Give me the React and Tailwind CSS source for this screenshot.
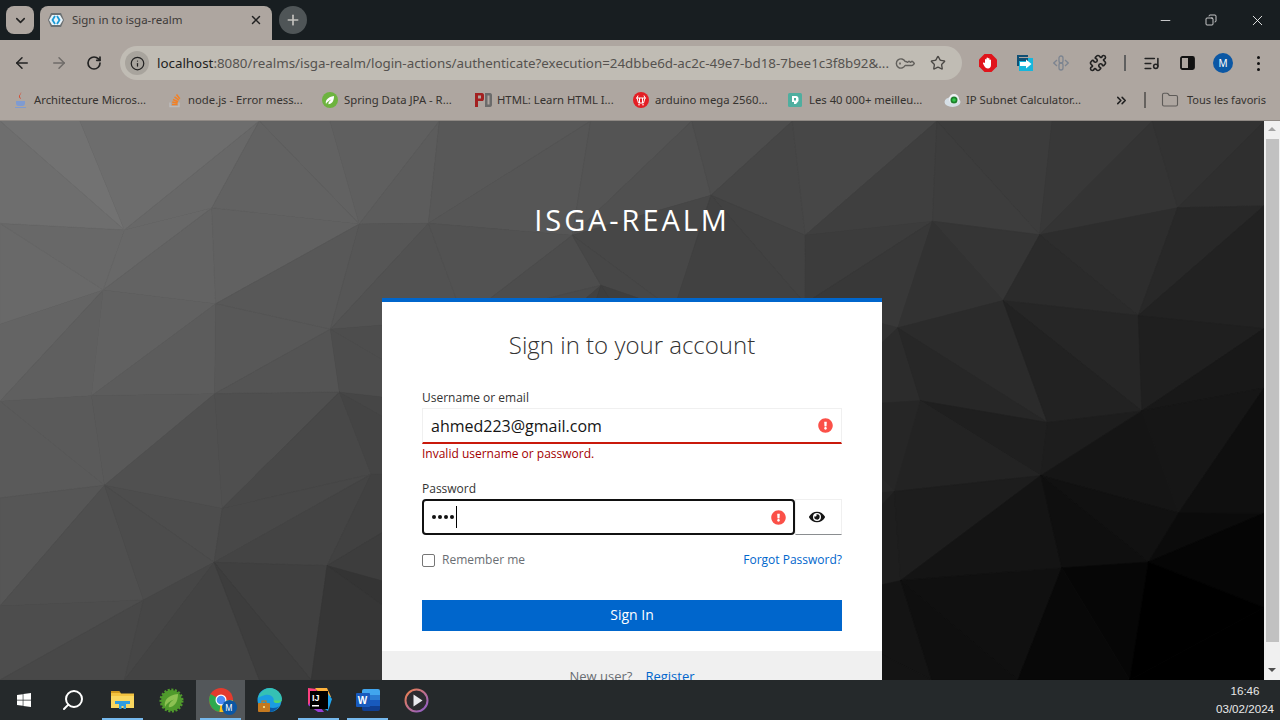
import {
  ArrowLeft,
  ArrowRight,
  ChevronDown,
  ChevronsRight,
  Copy,
  Folder,
  Info,
  KeyRound,
  ListMusic,
  Minus,
  Plus,
  Puzzle,
  RotateCw,
  Search,
  Star,
  X,
} from "lucide-react";
import { FaExclamationCircle, FaEye, FaWindows } from "react-icons/fa";

// low-poly backdrop, seeded so every render gives the same mesh
function buildMesh() {
  let seed = 7;
  const rnd = () => {
    seed = (seed * 16807) % 2147483647;
    return seed / 2147483647;
  };
  const cols = 11;
  const rows = 6;
  const w = 1264;
  const h = 559;
  const pts = [];
  for (let r = 0; r <= rows; r++) {
    const row = [];
    for (let c = 0; c <= cols; c++) {
      const jx = c === 0 || c === cols ? 0 : (rnd() - 0.5) * 70;
      const jy = r === 0 || r === rows ? 0 : (rnd() - 0.5) * 50;
      row.push([(c * w) / cols + jx, (r * h) / rows + jy]);
    }
    pts.push(row);
  }
  const shade = (a, b, c) => {
    const x = (a[0] + b[0] + c[0]) / 3;
    const y = (a[1] + b[1] + c[1]) / 3;
    const top = 120 - 0.055 * x;
    const bottom = 78 - 0.068 * x;
    const v = top + ((bottom - top) * y) / 530 + (rnd() - 0.5) * 4;
    const g = Math.max(0, Math.round(v));
    return `rgb(${g},${g},${g})`;
  };
  const tris = [];
  for (let r = 0; r < rows; r++) {
    for (let c = 0; c < cols; c++) {
      const p = pts[r][c];
      const q = pts[r][c + 1];
      const s = pts[r + 1][c];
      const t = pts[r + 1][c + 1];
      const pair = rnd() > 0.5 ? [[p, q, s], [q, t, s]] : [[p, q, t], [p, t, s]];
      pair.forEach((tri) => tris.push({ d: tri.map((n) => n.join(",")).join(" "), fill: shade(...tri) }));
    }
  }
  return tris;
}

const MESH = buildMesh();

const BOOKMARKS = [
  { label: "Architecture Micros...", icon: <JavaIcon />, box: "w-[154px]", slot: "w-[20px]" },
  { label: "node.js - Error mess...", icon: <StackIcon />, box: "w-[154px]", slot: "w-[20px]" },
  { label: "Spring Data JPA - R...", icon: <SpringIcon />, box: "w-[153px]", slot: "w-[22px]" },
  { label: "HTML: Learn HTML I...", icon: <PdIcon />, box: "w-[158px]", slot: "w-[22px]" },
  { label: "arduino mega 2560...", icon: <CartIcon />, box: "w-[155px]", slot: "w-[22px]" },
  { label: "Les 40 000+ meilleu...", icon: <DocIcon />, box: "w-[156px]", slot: "w-[21px]" },
  { label: "IP Subnet Calculator...", icon: <SubnetIcon />, box: "w-[148px]", slot: "w-[22px]" },
];

function JavaIcon() {
  return (
    <svg width="14" height="16" viewBox="0 0 14 16">
      <path d="M7 0c1 2-2 3-1 5 .3.8 1 1.300 1 2-1-.6-2.500-1.500-2-3C5.500 2.500 7 2 7 0z" fill="#d9472b" />
      <path d="M2 9h9v2c0 2-1 3-2.500 3h-4C3 14 2 13 2 11z" fill="#7f9bd1" />
      <path d="M1 15h11v1H1z" fill="#7f9bd1" />
    </svg>
  );
}

function StackIcon() {
  return (
    <svg width="14" height="16" viewBox="0 0 14 16" fill="none" stroke="#f48024" strokeWidth="1.500">
      <path d="M2 10.500v4h9v-4" stroke="#bcbbbb" />
      <path d="M4 12.500h5.500M4.200 10l5.300 1M5 7.500l5 2.300M6.500 4.800l4.400 3.400M8.500 2.500l3.300 4.300" />
    </svg>
  );
}

function SpringIcon() {
  return (
    <svg width="16" height="16" viewBox="0 0 16 16">
      <circle cx="8" cy="8" r="8" fill="#6db33f" />
      <path d="M4 12c-1-4 2-7 8-8 0 5-2 8-5.500 8.300C6 11 7 9 9.500 7.500 7 8.500 5 10 4 12z" fill="#fff" />
    </svg>
  );
}

function SpringToolIcon() {
  return (
    <svg width="25" height="25" viewBox="0 0 25 25">
      <circle cx="12.500" cy="12.500" r="10.500" fill="#4f9a2c" stroke="#4f9a2c" strokeWidth="3" strokeDasharray="2 1.500" />
      <path d="M6 19c-1.500-7 3.500-12 13-13 0 8-3.500 13-9 13.300C9 17.500 11 14 15 11.500c-4 1.500-7.500 4-9 7.500z" fill="#8cc152" />
    </svg>
  );
}

function PdIcon() {
  return (
    <svg width="17" height="14" viewBox="0 0 17 14">
      <path d="M0 0h7c1.500 0 2 1 2 2.500v3C9 7.500 8 8 7 8H3v6H0zM3 2.500v3h3v-3z" fill="#a32020" fillRule="evenodd" />
      <path d="M10 0h5c1.500 0 2 1 2 2.500v9c0 1.500-.5 2.500-2 2.500h-5zM12.500 2.500v9H14.500v-9z" fill="#6b6b6b" fillRule="evenodd" />
    </svg>
  );
}

function CartIcon() {
  return (
    <svg width="16" height="16" viewBox="0 0 16 16">
      <circle cx="8" cy="8" r="8" fill="#e31e24" />
      <path d="M3 6h10M4 6l1.500 5h5L12 6M6.500 6v5M9.500 6v5M5 3.500l-1 2.500M11 3.500l1 2.500" stroke="#fff" strokeWidth="1" fill="none" />
      <circle cx="6" cy="12.800" r=".8" fill="#fff" />
      <circle cx="10" cy="12.800" r=".8" fill="#fff" />
    </svg>
  );
}

function DocIcon() {
  return (
    <svg width="14" height="14" viewBox="0 0 14 14">
      <rect width="14" height="14" rx="1.500" fill="#4fae9f" />
      <path d="M4 3h4c1.500 0 2.500 1 2.500 2.500V8L8 11H6V9H4z" fill="#fff" />
      <path d="M6 5h2v2.500H6z" fill="#4fae9f" />
    </svg>
  );
}

function SubnetIcon() {
  return (
    <svg width="17" height="15" viewBox="0 0 17 15">
      <ellipse cx="8.500" cy="9" rx="8" ry="5" fill="#d6dfe6" />
      <circle cx="10" cy="6" r="5" fill="#eef2f5" />
      <circle cx="10" cy="7" r="3.500" fill="#1d7f2c" />
      <circle cx="10" cy="7" r="1.800" fill="#31c94a" />
    </svg>
  );
}

function RealmFavicon() {
  return (
    <svg width="16" height="16" viewBox="0 0 16 16">
      <path d="M3 1h10l3 7-3 7H3L0 8z" fill="#6b7072" />
      <path d="M1 8l3-5h8l3 5-3 5H4z" fill="#e8f4fb" />
      <path d="M7 4L4.500 8 7 12M9 4l2.500 4L9 12" stroke="#1a9ad6" strokeWidth="1.800" fill="none" />
    </svg>
  );
}

function StopHandIcon() {
  return (
    <svg width="18" height="18" viewBox="0 0 18 18">
      <path d="M5.500 0h7L18 5.500v7L12.500 18h-7L0 12.500v-7z" fill="#e0141b" />
      <path d="M6 9V5.500a.8.8 0 011.500 0V8V4a.8.8 0 011.500 0v4V4.500a.8.8 0 011.500 0V8.500V6a.8.8 0 011.500 0v5c0 2-1.200 3.500-3 3.500S6 13.500 5 11.500L4 9.500c-.3-1 .9-1.500 1.400-.7z" fill="#fff" />
    </svg>
  );
}

function ForwardExtIcon() {
  return (
    <svg width="17" height="17" viewBox="0 0 17 17">
      <path d="M0 0h11v2H2v9H0z" fill="#104f74" />
      <rect x="2" y="3" width="14" height="13" fill="#16b6dc" />
      <rect x="2" y="3" width="9" height="3" fill="#104f74" />
      <path d="M3 7h6V4.500L14.500 9 9 13.500V11H3z" fill="#fff" />
    </svg>
  );
}

function LinkExtIcon() {
  return (
    <svg width="16" height="18" viewBox="0 0 16 18" fill="none" stroke="#7c8490" strokeWidth="1.300">
      <path d="M4 6L.8 9 4 12M12 6l3.200 3L12 12" />
      <rect x="6" y="2" width="4" height="7" rx="2" />
      <rect x="6" y="9" width="4" height="7" rx="2" />
    </svg>
  );
}

function SidePanelIcon() {
  return (
    <svg width="15" height="14" viewBox="0 0 15 14">
      <rect x="1" y="1" width="13" height="12" rx="1.500" fill="none" stroke="#111" strokeWidth="1.800" />
      <rect x="8" y="1" width="6" height="12" fill="#111" />
    </svg>
  );
}

function ExplorerIcon() {
  return (
    <svg width="23" height="20" viewBox="0 0 23 20">
      <path d="M0 1h8l2 2.500h13V18H0z" fill="#f3c340" />
      <path d="M0 1h8l1.500 2H0z" fill="#d29a1e" />
      <path d="M0 6h23v12H0z" fill="#fad75f" />
      <path d="M4 11h15v3H15v5h-2.500v-3h-2v3H8v-5H4z" fill="#2f9ce0" />
    </svg>
  );
}

function ChromeIcon() {
  return (
    <div className="relative h-6 w-6">
      <svg width="24" height="24" viewBox="0 0 24 24">
        <circle cx="12" cy="12" r="12" fill="#e33b2e" />
        <path d="M12 12L1.600 6A12 12 0 000 12a12 12 0 0010.500 11.900z" fill="#2da94f" />
        <path d="M12 12h12a12 12 0 01-13.500 11.900z" fill="#fbc116" />
        <circle cx="12" cy="12" r="5.500" fill="#fff" />
        <circle cx="12" cy="12" r="4.300" fill="#4a8df6" />
      </svg>
      <span className="absolute -right-[4px] -bottom-[3px] flex h-[15px] w-[15px] items-center justify-center rounded-full bg-[#0b57a4] text-[8px] text-white">M</span>
    </div>
  );
}

function EdgeIcon() {
  return (
    <svg width="25" height="25" viewBox="0 0 25 25">
      <circle cx="12.500" cy="12" r="12" fill="#1b9de2" />
      <path d="M1 10C3 3 9 0 13 0c6 0 12 5 12 11 0 3-3 4.500-6 4-3-.5-2-3-2.500-4.500C15.500 8 12 6 8 7c-3 .8-6 2-7 3z" fill="#35c1b4" />
      <path d="M25 11c0 3-3 4.500-6 4-2-.3-2.300-1.500-2.400-2.500H25z" fill="#53d66c" />
      <path d="M12 24C6 24 5 17 8.500 14 8 17 11 20 16 20c3 0 5-1 6-2-2 3.500-6 6-10 6z" fill="#0c59a4" />
      <rect x="1" y="15" width="12" height="9" rx="1" fill="#c5791f" />
      <rect x="5" y="13" width="4" height="3" fill="none" stroke="#c5791f" strokeWidth="1.200" />
      <rect x="6" y="18" width="2" height="2" fill="#f4d27a" />
    </svg>
  );
}

function IntellijIcon() {
  return (
    <svg width="26" height="26" viewBox="0 0 26 26">
      <path d="M2 1l9 1-3 12-6 4z" fill="#fc3f7f" />
      <path d="M9 1h12l4 9-6 3z" fill="#fcb13c" />
      <path d="M20 4l6 8-4 12-8-5z" fill="#1ea6f0" />
      <path d="M2 18l10 7h6L8 12z" fill="#9a3fd6" />
      <rect x="4" y="4" width="18" height="18" fill="#000" />
      <text x="6" y="14" fontFamily="'Liberation Sans', sans-serif" fontWeight="700" fontSize="9" fill="#fff">IJ</text>
      <rect x="6" y="18" width="7" height="1.500" fill="#fff" />
    </svg>
  );
}

function WordIcon() {
  return (
    <div className="relative h-[22px] w-6">
      <div className="absolute top-0 right-0 flex h-[22px] w-[18px] flex-col overflow-hidden rounded-[2px]">
        <div className="h-[6px] bg-[#41a5ee]" />
        <div className="h-[5px] bg-[#2b7cd3]" />
        <div className="h-[6px] bg-[#185abd]" />
        <div className="h-[5px] bg-[#103f91]" />
      </div>
      <div className="absolute top-[4px] left-0 flex h-[14px] w-[14px] items-center justify-center rounded-[1px] bg-[#185abd] font-['Liberation_Sans',sans-serif] text-[10px] font-bold text-white">W</div>
    </div>
  );
}

function PlayerIcon() {
  return (
    <svg width="25" height="25" viewBox="0 0 25 25">
      <defs>
        <linearGradient id="ring" x1="0" y1="0" x2="1" y2="1">
          <stop offset="0" stopColor="#f0824c" />
          <stop offset="1" stopColor="#8a5bd0" />
        </linearGradient>
      </defs>
      <circle cx="12.500" cy="12.500" r="11" fill="#2c2b30" stroke="url(#ring)" strokeWidth="2" />
      <path d="M9.500 6.500l9 6-9 6z" fill="#e9e9ee" />
    </svg>
  );
}

function TaskSlot({ active, running, children }) {
  return (
    <div className={`relative flex h-10 w-[49px] items-center justify-center ${active ? "bg-[#53575a]" : ""}`}>
      {children}
      {running ? <span className="absolute inset-x-1 bottom-0 h-[2px] bg-[#76b9ed]" /> : null}
    </div>
  );
}

export default function App() {
  return (
    <div className="flex h-[720px] w-[1280px] flex-col overflow-hidden bg-black font-['Noto_Sans',sans-serif]">
      {/* tab strip */}
      <div className="flex h-10 shrink-0 items-end bg-[#181e21]">
        <div className="mb-[6px] ml-[6px] flex h-7 w-7 items-center justify-center rounded-lg bg-[#aea6a0]">
          <ChevronDown size={15} strokeWidth={2.500} className="text-[#222]" />
        </div>
        <div className="ml-[6px] flex h-[34px] w-[232px] items-center rounded-t-lg bg-[#aea6a0] pr-[9px] pb-[6px] pl-2">
          <RealmFavicon />
          <span className="ml-2 flex-1 text-[11.500px] text-[#3d3a38]">Sign in to isga-realm</span>
          <X size={14} strokeWidth={2.500} className="text-[#222]" />
        </div>
        <div className="mb-[6px] ml-[7px] flex h-7 w-7 items-center justify-center rounded-full bg-[#4f5557]">
          <Plus size={16} strokeWidth={2.500} className="text-[#c4c2bf]" />
        </div>
        <div className="ml-auto flex h-10 items-center">
          <div className="flex w-[46px] justify-center">
            <Minus size={15} strokeWidth={1.200} className="text-white" />
          </div>
          <div className="flex w-[46px] justify-center">
            <Copy size={12} strokeWidth={1.500} className="-scale-x-100 text-white" />
          </div>
          <div className="flex w-[46px] justify-center">
            <X size={17} strokeWidth={1.200} className="text-white" />
          </div>
        </div>
      </div>

      {/* toolbar */}
      <div className="flex h-[41px] shrink-0 items-center bg-[#aea6a0] pt-[5px] text-[#222]">
        <div className="flex w-[120px] shrink-0 items-center justify-between pr-[18px] pl-[13px]">
          <ArrowLeft size={18} strokeWidth={2} />
          <ArrowRight size={18} strokeWidth={2} className="text-[#6f6b68]" />
          <RotateCw size={16} strokeWidth={2.500} />
        </div>
        <div className="flex h-[34px] w-[842px] shrink-0 items-center rounded-full bg-[#c0bcb4] pl-[5px]">
          <div className="flex h-6 w-6 shrink-0 items-center justify-center rounded-full bg-[#a8a49d]">
            <Info size={15} strokeWidth={2} />
          </div>
          <div className="ml-[8px] w-[735px] shrink-0 text-[13.350px] whitespace-nowrap text-[#55524f]">
            <span className="text-[#222]">localhost</span>:8080/realms/isga-realm/login-actions/authenticate?execution=24dbbe6d-ac2c-49e7-bd18-7bee1c3f8b92&...
          </div>
          <KeyRound size={17} strokeWidth={2} className="ml-[4px] -rotate-[135deg] text-[#62605c]" />
          <Star size={16} strokeWidth={2} className="ml-[17px] text-[#4a4845]" />
        </div>
        <div className="flex flex-1 items-center">
          <div className="flex w-[35px] justify-end"><StopHandIcon /></div>
          <div className="flex w-[37px] justify-end"><ForwardExtIcon /></div>
          <div className="flex w-[35px] justify-end"><LinkExtIcon /></div>
          <div className="flex w-[38px] justify-end"><Puzzle size={18} strokeWidth={2.200} /></div>
          <div className="ml-[17px] h-4 w-[2px] bg-[#5f5f5f]" />
          <div className="ml-[17px]"><ListMusic size={17} strokeWidth={2.200} /></div>
          <div className="ml-[20px]"><SidePanelIcon /></div>
          <div className="ml-[18px] flex h-5 w-5 items-center justify-center rounded-full bg-[#0b57a4] text-[10px] text-white">M</div>
          <div className="ml-[24px] flex flex-col gap-[3px]">
            <span className="h-[3px] w-[3px] rounded-full bg-[#111]" />
            <span className="h-[3px] w-[3px] rounded-full bg-[#111]" />
            <span className="h-[3px] w-[3px] rounded-full bg-[#111]" />
          </div>
        </div>
      </div>

      {/* bookmarks */}
      <div className="flex h-[40px] shrink-0 items-center border-b border-[#8f8984] bg-[#aea6a0] pb-[1px] pl-[14px] text-[11.300px] text-[#35322f]">
        {BOOKMARKS.map((item) => (
          <div key={item.label} className={`flex shrink-0 items-center ${item.box}`}>
            <span className={`flex shrink-0 ${item.slot}`}>{item.icon}</span>
            <span className="whitespace-nowrap">{item.label}</span>
          </div>
        ))}
        <ChevronsRight size={15} strokeWidth={2.500} className="ml-[22px] text-[#222]" />
        <div className="ml-[15px] h-[16px] w-[2px] bg-[#66625f]" />
        <Folder size={18} strokeWidth={1.500} className="ml-[15px] text-[#5e5b58]" />
        <span className="ml-2 text-[11px] whitespace-nowrap">Tous les favoris</span>
      </div>

      {/* page */}
      <div className="flex min-h-0 flex-1">
        <main className="relative min-w-0 flex-1 overflow-hidden bg-[#333] font-['Open_Sans',sans-serif]">
          <svg className="absolute inset-0" width="1264" height="559" viewBox="0 0 1264 559">
            {MESH.map((t) => (
              <polygon key={t.d} points={t.d} fill={t.fill} stroke={t.fill} strokeWidth="0.600" />
            ))}
          </svg>

          <div className="relative flex flex-col items-center">
            <h1 className="mt-[79px] mb-[58px] h-[40px] text-[29px] leading-[40px] tracking-[2.900px] text-white">ISGA-REALM</h1>

            <div className="w-[500px] border-t-4 border-[#0066cc] bg-white">
              <div className="px-10 pt-[25px] pb-5">
                <h2 className="mb-[26px] text-center text-[24px] leading-[36px] font-light text-[#333]">Sign in to your account</h2>

                <label className="block text-xs leading-[18px] text-[#333]">Username or email</label>
                <div className="mt-[1px] flex h-9 items-center justify-between border border-b-2 border-[#f0f0f0] border-b-[#c9190b] pr-[8px] pl-2">
                  <span className="text-base text-[#151515]">ahmed223@gmail.com</span>
                  <FaExclamationCircle size={15} className="text-[#fb5048]" />
                </div>
                <p className="mt-[1px] text-xs leading-[18px] text-[#a30000]">Invalid username or password.</p>

                <label className="mt-[17px] block text-xs leading-[18px] text-[#333]">Password</label>
                <div className="mt-[1px] flex h-9">
                  <div className="flex w-[373px] items-center justify-between rounded-[4px] border-2 border-[#111] pr-[7px] pl-[8px]">
                    <span className="flex items-center gap-[2px]">
                      <span className="h-[4px] w-[4px] rounded-full bg-[#111]" />
                      <span className="h-[4px] w-[4px] rounded-full bg-[#111]" />
                      <span className="h-[4px] w-[4px] rounded-full bg-[#111]" />
                      <span className="h-[4px] w-[4px] rounded-full bg-[#111]" />
                      <span className="h-[22px] w-[1px] bg-black" />
                    </span>
                    <FaExclamationCircle size={15} className="text-[#fb5048]" />
                  </div>
                  <div className="flex flex-1 items-center justify-center border border-[#f0f0f0] border-b-[#8a8d90] pr-[4px]">
                    <FaEye size={16} className="text-[#151515]" />
                  </div>
                </div>

                <div className="mt-[16px] mb-[1px] flex h-[18px] items-center justify-between text-xs">
                  <div className="flex items-center">
                    <span className="h-[13px] w-[13px] rounded-[2px] border border-[#767676] bg-white" />
                    <span className="ml-[7px] text-[#6a6e73]">Remember me</span>
                  </div>
                  <a className="text-[#0066cc]">Forgot Password?</a>
                </div>

                <button type="button" className="mt-[30px] h-[31px] w-full bg-[#0066cc] pb-[2px] text-sm text-white">Sign In</button>
              </div>

              <div className="h-[60px] bg-[#f0f0f0] pt-[15px] text-center text-[13px] leading-[20px]">
                <span className="text-[#6a6e73]">New user?</span>
                <a className="ml-[13px] text-[#0066cc]">Register</a>
              </div>
            </div>
          </div>
        </main>

        {/* scrollbar */}
        <div className="flex w-4 shrink-0 flex-col items-center bg-[#f0f0f0]">
          <div className="mt-[6px] h-0 w-0 border-x-[4px] border-b-[4px] border-x-transparent border-b-[#a3a3a3]" />
          <div className="mt-[8px] h-[503px] w-[13px] bg-[#c1c1c1]" />
          <div className="mt-[26px] h-0 w-0 border-x-[4px] border-t-[4px] border-x-transparent border-t-[#505050]" />
        </div>
      </div>

      {/* taskbar */}
      <div className="flex h-10 shrink-0 items-center bg-[#25292b]">
        <div className="flex h-10 w-[48px] items-center justify-center">
          <FaWindows size={16} className="text-white" />
        </div>
        <div className="mr-[1px] flex h-10 w-[49px] items-center justify-center">
          <Search size={24} strokeWidth={2} className="-scale-x-100 text-white" />
        </div>
        <TaskSlot running><ExplorerIcon /></TaskSlot>
        <TaskSlot><SpringToolIcon /></TaskSlot>
        <TaskSlot active running><ChromeIcon /></TaskSlot>
        <TaskSlot><EdgeIcon /></TaskSlot>
        <TaskSlot running><IntellijIcon /></TaskSlot>
        <TaskSlot running><WordIcon /></TaskSlot>
        <TaskSlot><PlayerIcon /></TaskSlot>
        <div className="ml-auto w-[64px] pr-[6px] font-['Liberation_Sans',sans-serif] text-[11.600px] leading-[18px] text-[#e8e8e8]">
          <div className="text-center">16:46</div>
          <div className="whitespace-nowrap">03/02/2024</div>
        </div>
      </div>
    </div>
  );
}
